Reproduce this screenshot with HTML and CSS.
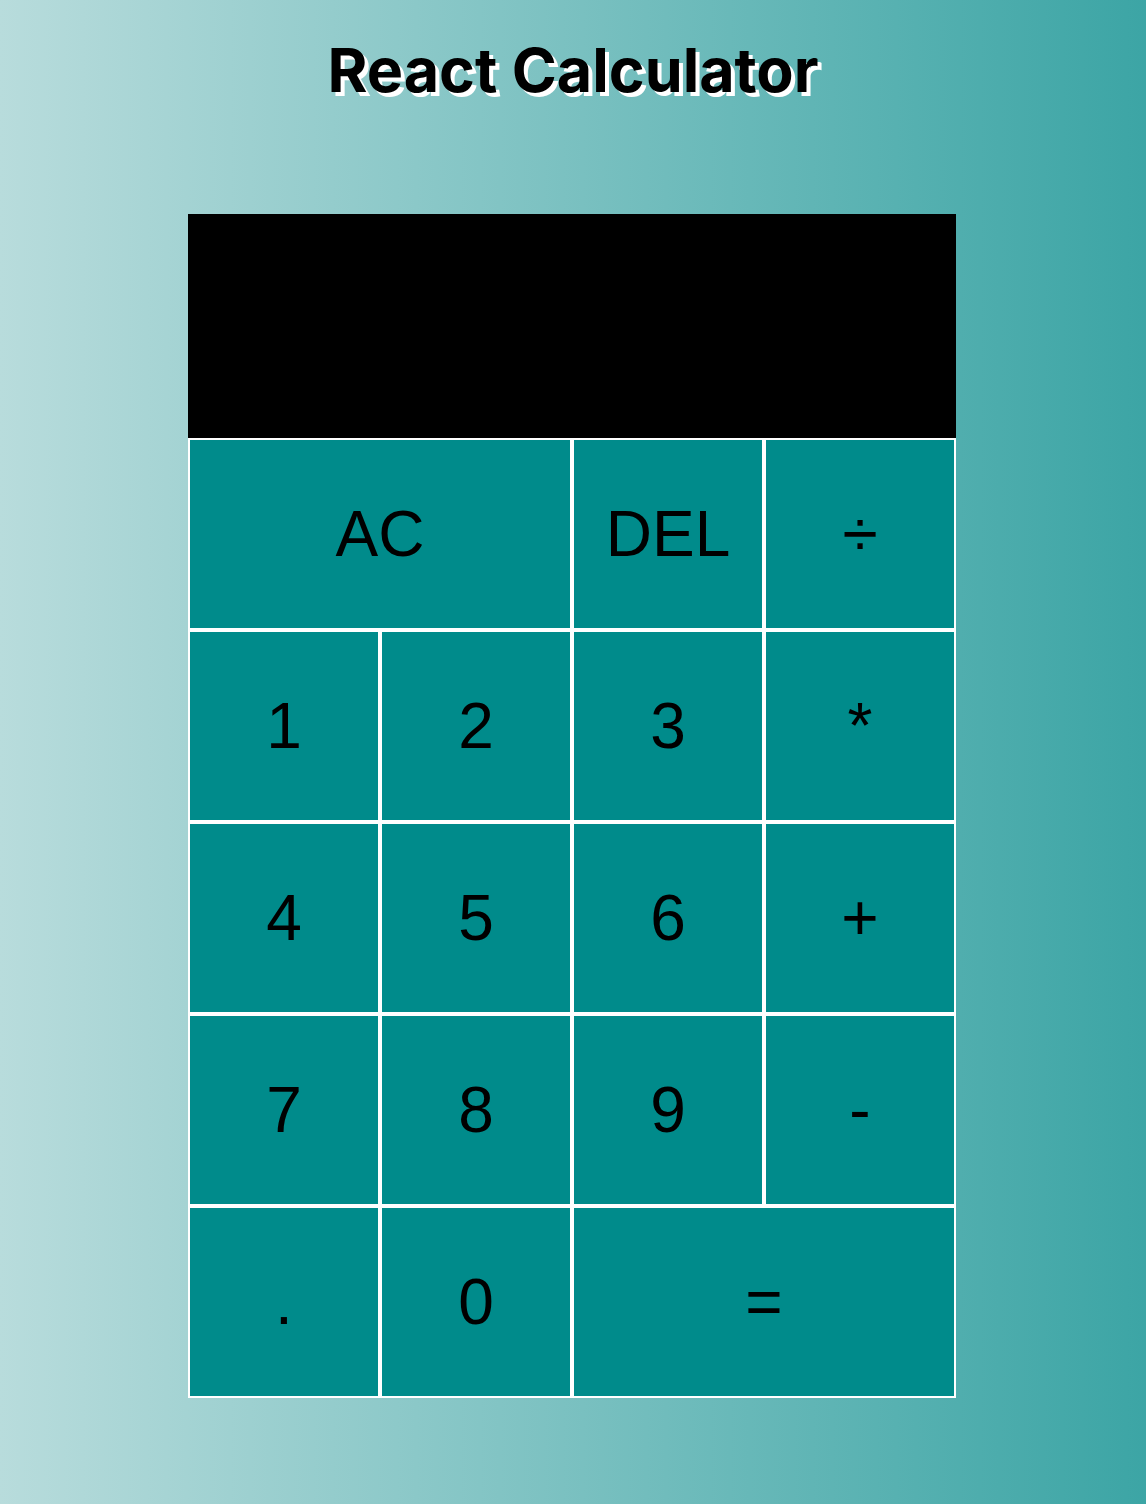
FILE: index.html
```html
<!DOCTYPE html>
<html lang="en">
<head>
<meta charset="utf-8">
<title>React Calculator</title>
<link rel="stylesheet" href="styles.css">
</head>
<body>
<div class="app">
  <h1 class="title">React Calculator</h1>
  <div class="calculator-grid">
    <div class="output"></div>
    <button class="span-two">AC</button>
    <button>DEL</button>
    <button>÷</button>
    <button>1</button>
    <button>2</button>
    <button>3</button>
    <button>*</button>
    <button>4</button>
    <button>5</button>
    <button>6</button>
    <button>+</button>
    <button>7</button>
    <button>8</button>
    <button>9</button>
    <button>-</button>
    <button>.</button>
    <button>0</button>
    <button class="span-two">=</button>
  </div>
</div>
</body>
</html>
```
FILE: styles.css
```css
* {
  box-sizing: border-box;
}

html, body {
  margin: 0;
  padding: 0;
  min-height: 100vh;
}

body {
  background: linear-gradient(to right, #b8dcdc, #3ca5a5);
  font-family: "Liberation Sans", Arial, sans-serif;
}

.app {
  display: flex;
  flex-direction: column;
  align-items: center;
  padding-top: 34px;
}

.title {
  margin: 0;
  font-family: Inter, "Liberation Sans", sans-serif;
  font-weight: 700;
  font-size: 61px;
  line-height: 72px;
  color: #000;
  text-shadow: 4px 4px 0 #fff;
}

.calculator-grid {
  margin-top: 108px;
  width: 770px;
  display: grid;
  grid-template-columns: repeat(4, 192px);
  grid-template-rows: 224px repeat(5, 192px);
}

.output {
  grid-column: 1 / -1;
  background: #000;
}

.calculator-grid > button {
  font-family: "Liberation Sans", Arial, sans-serif;
  font-size: 64px;
  color: #000;
  background-color: #008b8b;
  border: 2px solid #fff;
  outline: none;
  padding: 0;
  margin: 0;
  cursor: pointer;
}

.span-two {
  grid-column: span 2;
}
```
